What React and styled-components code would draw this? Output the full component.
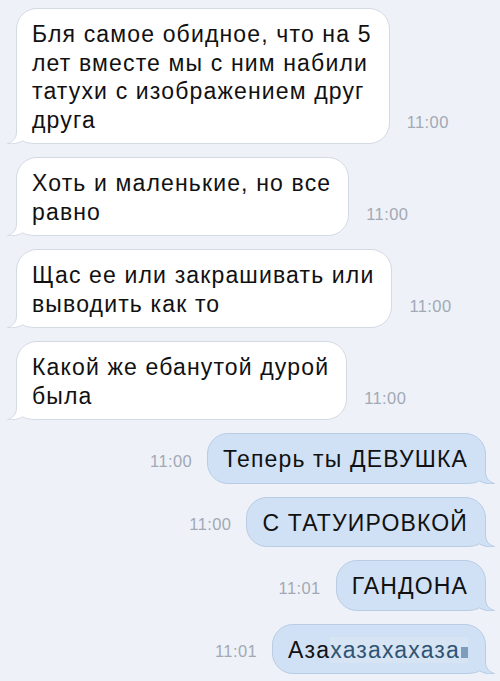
import React from 'react';
import styled, { createGlobalStyle } from 'styled-components';

const GlobalStyle = createGlobalStyle`
  html, body {
    margin: 0;
    padding: 0;
    background: #eef2f8;
  }
  body {
    font-family: "Liberation Sans", Arial, sans-serif;
  }
`;

const Chat = styled.div`
  width: 500px;
  height: 681px;
  box-sizing: border-box;
  padding: 8px 14px 0 16px;
  display: flex;
  flex-direction: column;
  gap: 13px;
  background: #eef2f8;
  overflow: hidden;
`;

const Row = styled.div`
  display: flex;
  align-items: flex-end;
  flex-direction: ${(p) => (p.out ? 'row-reverse' : 'row')};
  gap: ${(p) => (p.out ? '15px' : '17px')};
`;

const Bubble = styled.div`
  position: relative;
  padding: 11px 17px 9px 15px;
  border-radius: 21px;
  border: 1px solid ${(p) => (p.out ? '#b8cce4' : '#d4dae3')};
  background: ${(p) => (p.out ? '#d0e1f5' : '#ffffff')};
  color: #111;
  font-size: 23px;
  letter-spacing: 1.15px;
  line-height: 28.5px;
  white-space: nowrap;
`;

const Text = styled.span`
  position: relative;
  display: block;
`;

const Time = styled.span`
  font-size: 16.5px;
  line-height: 18px;
  color: #a2a9b4;
  padding-bottom: ${(p) => (p.out ? '14px' : '13px')};
  letter-spacing: 0.4px;
`;

const TailSvg = styled.svg`
  position: absolute;
  bottom: -1px;
  width: 32px;
  height: 24px;
  ${(p) => (p.out ? 'right: -10px; transform: scaleX(-1);' : 'left: -10px;')}
`;

const Mark = styled.span`
  color: #2f5475;
  background: rgba(214, 228, 243, 0.9);
`;

const Square = styled.span`
  display: inline-block;
  width: 7px;
  height: 11px;
  margin-left: 1px;
  background: #7d9dbb;
`;

const Tail = ({ out }) => {
  const fill = out ? '#d0e1f5' : '#ffffff';
  const stroke = out ? '#b8cce4' : '#d4dae3';
  return (
    <TailSvg out={out} viewBox="0 0 32 24">
      <path
        d="M9.5 0 L9.5 12 C9.5 18 6 22 0.5 23.5 C6 24.3 12 23.3 15.5 20.8 C19 23 24 23.5 32 23.5 L32 0 Z"
        fill={fill}
      />
      <path
        d="M9.5 0 L9.5 12 C9.5 18 6 22 0.5 23.5 C6 24.3 12 23.3 15.5 20.8 C19 23 24 23.5 32 23.5"
        fill="none"
        stroke={stroke}
        strokeWidth="1"
      />
    </TailSvg>
  );
};

const messages = [
  {
    lines: ['Бля самое обидное, что на 5', 'лет вместе мы с ним набили', 'татухи с изображением друг', 'друга'],
    time: '11:00',
  },
  { lines: ['Хоть и маленькие, но все', 'равно'], time: '11:00' },
  { lines: ['Щас ее или закрашивать или', 'выводить как то'], time: '11:00' },
  { lines: ['Какой же ебанутой дурой', 'была'], time: '11:00' },
  { lines: ['Теперь ты ДЕВУШКА'], time: '11:00', out: true },
  { lines: ['С ТАТУИРОВКОЙ'], time: '11:00', out: true },
  { lines: ['ГАНДОНА'], time: '11:01', out: true },
  { lines: ['Аза'], tail: 'хазахахаза', time: '11:01', out: true },
];

const App = () => {
  return (
    <>
      <GlobalStyle />
      <Chat>
        {messages.map((m, i) => (
          <Row key={i} out={m.out}>
            <Bubble out={m.out}>
              <Tail out={m.out} />
              <Text>
                {m.lines.map((line, j) => (
                  <React.Fragment key={j}>
                    {j > 0 && <br />}
                    {line}
                  </React.Fragment>
                ))}
                {m.tail && (
                  <Mark>
                    {m.tail}
                    <Square />
                  </Mark>
                )}
              </Text>
            </Bubble>
            <Time out={m.out}>{m.time}</Time>
          </Row>
        ))}
      </Chat>
    </>
  );
};

export default App;
